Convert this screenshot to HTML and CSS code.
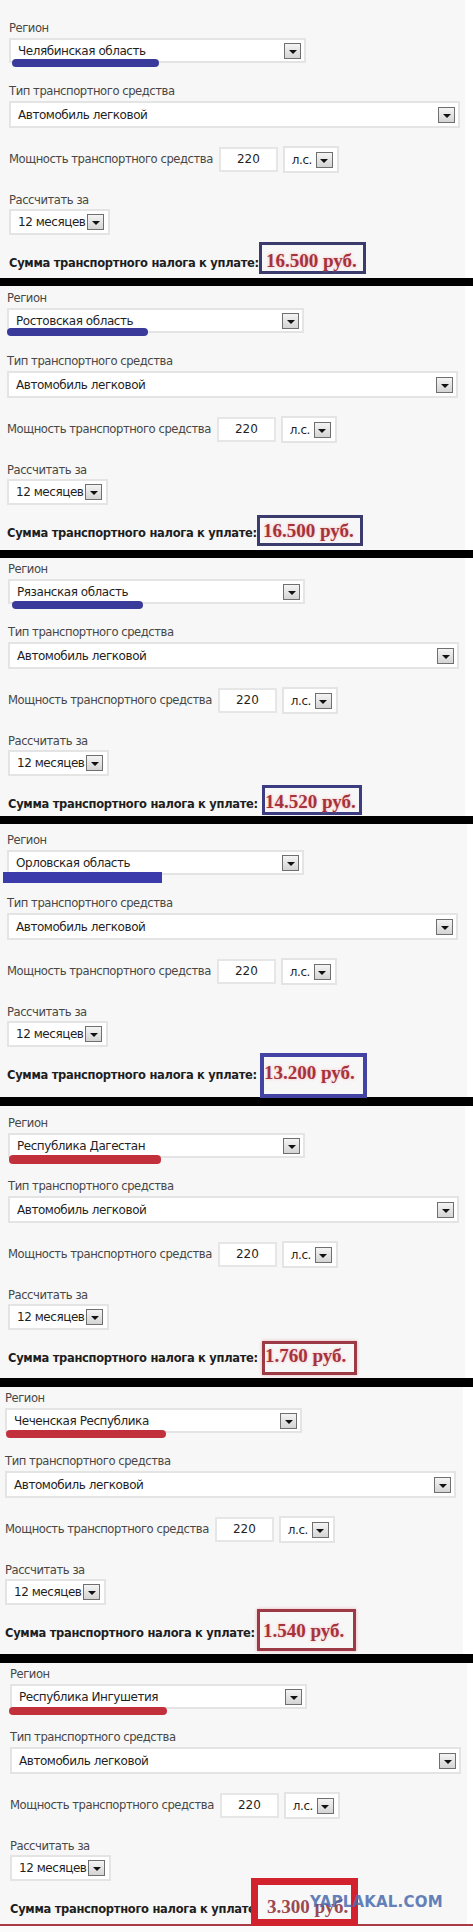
FILE: index.html
```html
<!DOCTYPE html>
<html lang="ru">
<head>
<meta charset="utf-8">
<title>Калькулятор транспортного налога</title>
<link rel="stylesheet" href="styles.css">
</head>
<body>
<main class="sheet">

  <section class="calc calc--1">
    <div class="field field--region">
      <div class="label">Регион</div>
      <div class="select select--region"><span class="select__value">Челябинская область</span><span class="select__btn"></span></div>
      <span class="mark mark--blue"></span>
    </div>
    <div class="field field--type">
      <div class="label">Тип транспортного средства</div>
      <div class="select select--wide"><span class="select__value">Автомобиль легковой</span><span class="select__btn"></span></div>
    </div>
    <div class="power">
      <span class="label">Мощность транспортного средства</span>
      <span class="input">220</span>
      <span class="select select--unit"><span class="select__value">л.с.</span><span class="select__btn"></span></span>
    </div>
    <div class="field field--period">
      <div class="label">Рассчитать за</div>
      <div class="select select--months"><span class="select__value">12 месяцев</span><span class="select__btn"></span></div>
    </div>
    <div class="total"><b class="total__label">Сумма транспортного налога к уплате:</b><span class="total__sum">16.500 руб.</span></div>
  </section>
  <div class="rule"></div>

  <section class="calc calc--2">
    <div class="field field--region">
      <div class="label">Регион</div>
      <div class="select select--region"><span class="select__value">Ростовская область</span><span class="select__btn"></span></div>
      <span class="mark mark--blue"></span>
    </div>
    <div class="field field--type">
      <div class="label">Тип транспортного средства</div>
      <div class="select select--wide"><span class="select__value">Автомобиль легковой</span><span class="select__btn"></span></div>
    </div>
    <div class="power">
      <span class="label">Мощность транспортного средства</span>
      <span class="input">220</span>
      <span class="select select--unit"><span class="select__value">л.с.</span><span class="select__btn"></span></span>
    </div>
    <div class="field field--period">
      <div class="label">Рассчитать за</div>
      <div class="select select--months"><span class="select__value">12 месяцев</span><span class="select__btn"></span></div>
    </div>
    <div class="total"><b class="total__label">Сумма транспортного налога к уплате:</b><span class="total__sum">16.500 руб.</span></div>
  </section>
  <div class="rule"></div>

  <section class="calc calc--3">
    <div class="field field--region">
      <div class="label">Регион</div>
      <div class="select select--region"><span class="select__value">Рязанская область</span><span class="select__btn"></span></div>
      <span class="mark mark--blue"></span>
    </div>
    <div class="field field--type">
      <div class="label">Тип транспортного средства</div>
      <div class="select select--wide"><span class="select__value">Автомобиль легковой</span><span class="select__btn"></span></div>
    </div>
    <div class="power">
      <span class="label">Мощность транспортного средства</span>
      <span class="input">220</span>
      <span class="select select--unit"><span class="select__value">л.с.</span><span class="select__btn"></span></span>
    </div>
    <div class="field field--period">
      <div class="label">Рассчитать за</div>
      <div class="select select--months"><span class="select__value">12 месяцев</span><span class="select__btn"></span></div>
    </div>
    <div class="total"><b class="total__label">Сумма транспортного налога к уплате:</b><span class="total__sum">14.520 руб.</span></div>
  </section>
  <div class="rule"></div>

  <section class="calc calc--4">
    <div class="field field--region">
      <div class="label">Регион</div>
      <div class="select select--region"><span class="select__value">Орловская область</span><span class="select__btn"></span></div>
      <span class="mark mark--bar"></span>
    </div>
    <div class="field field--type">
      <div class="label">Тип транспортного средства</div>
      <div class="select select--wide"><span class="select__value">Автомобиль легковой</span><span class="select__btn"></span></div>
    </div>
    <div class="power">
      <span class="label">Мощность транспортного средства</span>
      <span class="input">220</span>
      <span class="select select--unit"><span class="select__value">л.с.</span><span class="select__btn"></span></span>
    </div>
    <div class="field field--period">
      <div class="label">Рассчитать за</div>
      <div class="select select--months"><span class="select__value">12 месяцев</span><span class="select__btn"></span></div>
    </div>
    <div class="total"><b class="total__label">Сумма транспортного налога к уплате:</b><span class="total__sum">13.200 руб.</span></div>
  </section>
  <div class="rule rule--thick"></div>

  <section class="calc calc--5">
    <div class="field field--region">
      <div class="label">Регион</div>
      <div class="select select--region"><span class="select__value">Республика Дагестан</span><span class="select__btn"></span></div>
      <span class="mark mark--red"></span>
    </div>
    <div class="field field--type">
      <div class="label">Тип транспортного средства</div>
      <div class="select select--wide"><span class="select__value">Автомобиль легковой</span><span class="select__btn"></span></div>
    </div>
    <div class="power">
      <span class="label">Мощность транспортного средства</span>
      <span class="input">220</span>
      <span class="select select--unit"><span class="select__value">л.с.</span><span class="select__btn"></span></span>
    </div>
    <div class="field field--period">
      <div class="label">Рассчитать за</div>
      <div class="select select--months"><span class="select__value">12 месяцев</span><span class="select__btn"></span></div>
    </div>
    <div class="total"><b class="total__label">Сумма транспортного налога к уплате:</b><span class="total__sum">1.760 руб.</span></div>
  </section>
  <div class="rule rule--thick"></div>

  <section class="calc calc--6">
    <div class="field field--region">
      <div class="label">Регион</div>
      <div class="select select--region"><span class="select__value">Чеченская Республика</span><span class="select__btn"></span></div>
      <span class="mark mark--red"></span>
    </div>
    <div class="field field--type">
      <div class="label">Тип транспортного средства</div>
      <div class="select select--wide"><span class="select__value">Автомобиль легковой</span><span class="select__btn"></span></div>
    </div>
    <div class="power">
      <span class="label">Мощность транспортного средства</span>
      <span class="input">220</span>
      <span class="select select--unit"><span class="select__value">л.с.</span><span class="select__btn"></span></span>
    </div>
    <div class="field field--period">
      <div class="label">Рассчитать за</div>
      <div class="select select--months"><span class="select__value">12 месяцев</span><span class="select__btn"></span></div>
    </div>
    <div class="total"><b class="total__label">Сумма транспортного налога к уплате:</b><span class="total__sum">1.540 руб.</span></div>
  </section>
  <div class="rule rule--thick"></div>

  <section class="calc calc--7">
    <div class="field field--region">
      <div class="label">Регион</div>
      <div class="select select--region"><span class="select__value">Республика Ингушетия</span><span class="select__btn"></span></div>
      <span class="mark mark--red"></span>
    </div>
    <div class="field field--type">
      <div class="label">Тип транспортного средства</div>
      <div class="select select--wide"><span class="select__value">Автомобиль легковой</span><span class="select__btn"></span></div>
    </div>
    <div class="power">
      <span class="label">Мощность транспортного средства</span>
      <span class="input">220</span>
      <span class="select select--unit"><span class="select__value">л.с.</span><span class="select__btn"></span></span>
    </div>
    <div class="field field--period">
      <div class="label">Рассчитать за</div>
      <div class="select select--months"><span class="select__value">12 месяцев</span><span class="select__btn"></span></div>
    </div>
    <div class="total"><b class="total__label">Сумма транспортного налога к уплате:</b><span class="total__sum">3.300 руб.</span></div>
    <span class="watermark">YAPLAKAL.COM</span>
  </section>
  <div class="underline-red"></div>

</main>
</body>
</html>
```

FILE: styles.css
```css
* {
  box-sizing: border-box;
}

html,
body {
  margin: 0;
  padding: 0;
  background: #fff;
}

body {
  font-family: "DejaVu Sans", Verdana, sans-serif;
  font-size: 12px;
  color: #474747;
}

.sheet {
  width: 473px;
  overflow: hidden;
}

/* one calculator snapshot */
.calc {
  --dx: 8px;
  --dy: 4px;
  --h: 264px;
  position: relative;
  width: 465px;
  height: var(--h);
  padding: var(--dy) 0 0 var(--dx);
  background: #f7f7f7;
}

.calc--1 { --dx: 9px; --dy: 21px; --h: 278px; }
.calc--2 { --dx: 7px; --dy: 5px;  --h: 264px; }
.calc--3 { --dx: 8px; --dy: 4px;  --h: 258px; }
.calc--4 { --dx: 7px; --dy: 9px;  --h: 273px; width: 467px; }
.calc--5 { --dx: 8px; --dy: 10px; --h: 272px; }
.calc--6 { --dx: 5px; --dy: 4px;  --h: 267px; width: 463px; }
.calc--7 { --dx: 10px; --dy: 4px; --h: 261px; width: 467px; }

.rule {
  height: 8px;
  background: #000;
}

.rule--thick {
  height: 9px;
}

.underline-red {
  height: 8px;
  border-top: 2px solid #a93a45;
  background: #fbfbfb;
}

.label {
  font-size: 11.6px;
  line-height: 15px;
  letter-spacing: -0.45px;
  white-space: nowrap;
}

/* form controls */
.select {
  display: flex;
  align-items: center;
  justify-content: space-between;
  background: #fff;
  border: 2px solid #e4e4e4;
  padding: 0 3px 0 7px;
  color: #1f1f1f;
  letter-spacing: -0.45px;
  white-space: nowrap;
}

.select__btn {
  display: flex;
  align-items: center;
  justify-content: center;
  flex: none;
  width: 17px;
  height: 16px;
  border: 1px solid #6f6f6f;
  background: linear-gradient(#f4f4f4, #d4d4d4);
  padding-top: 2px;
}

.select__btn::after {
  content: "";
  border-left: 4px solid transparent;
  border-right: 4px solid transparent;
  border-top: 4px solid #111;
}

.field {
  position: relative;
}

.field .select {
  margin-top: 2px;
}

.select--region {
  width: 297px;
  height: 25px;
}

.field--type {
  margin-top: 21px;
}

.select--wide {
  width: 451px;
  height: 27px;
}

.power {
  display: flex;
  align-items: center;
  height: 27px;
  margin-top: 18px;
}

.input {
  width: 59px;
  height: 25px;
  margin: 0 5px 0 6px;
  border: 2px solid #e6e6e6;
  background: #fff;
  color: #1f1f1f;
  text-align: center;
  line-height: 21px;
}

.select--unit {
  width: 56px;
  height: 27px;
  padding-right: 4px;
}

.field--period {
  margin-top: 20px;
}

.field--period .select {
  margin-top: 1px;
}

.select--months {
  width: 101px;
  height: 26px;
  padding-right: 4px;
}

/* hand-drawn highlight under the chosen region */
.mark {
  position: absolute;
  left: 3px;
  top: 38px;
  width: 147px;
  height: 8px;
  border-radius: 4px;
}

.mark--blue { background: #3a3a9a; }
.mark--bar  { background: #3b3bac; border-radius: 0; }
.mark--red  { background: #c2303c; }

.calc--1 .mark { left: 3px;  top: 38px; width: 147px; }
.calc--2 .mark { left: 0;    top: 37px; width: 141px; }
.calc--3 .mark { left: 4px;  top: 39px; width: 131px; }
.calc--4 .mark { left: -4px; top: 39px; width: 159px; height: 11px; }
.calc--5 .mark { left: 1px;  top: 39px; width: 152px; height: 9px; }
.calc--6 .mark { left: 1px;  top: 39px; width: 160px; }
.calc--7 .mark { left: -1px; top: 40px; width: 158px; }

/* total line */
.total {
  margin-top: 20px;
  line-height: 15px;
  white-space: nowrap;
  color: #1e1e1e;
}

.total__label {
  font-size: 11.5px;
  letter-spacing: -0.3px;
}

.total__sum {
  font-family: "Liberation Serif", "Times New Roman", serif;
  font-weight: bold;
  font-size: 19px;
  line-height: 12px;
  color: #a3343e;
  text-shadow: 0 0 3px rgba(255, 150, 150, 0.7);
  border: 3px solid #3b3b6e;
}

.calc--1 .total__sum { margin-left: 0;    padding: 5px 6px 0 4px; }
.calc--2 .total__sum { margin-left: 0;    padding: 2px 6px 2px 3px; }
.calc--3 .total__sum { margin-left: 4px;  padding: 3px 3px 0 0; border-color: #3c3c80; }
.calc--4 .total__sum {
  margin-left: 3px;
  padding: 5px 8px 11px 0;
  border: 4px solid #4343a4;
}
.calc--5 .total__sum,
.calc--6 .total__sum {
  border-color: #9c3a45;
  box-shadow: 0 0 3px rgba(230, 120, 130, 0.6);
}
.calc--5 .total__sum { margin-left: 4px; padding: 1px 8px 6px 0; }
.calc--6 .total__sum { margin-left: 2px; padding: 8px 9px 7px 3px; }
.calc--7 .total__sum {
  margin-left: -9px;
  padding: 11px 3px 2px 9px;
  border: 7px solid #d2222e;
  background: #f8f8f8;
  color: #9a4a50;
  text-shadow: none;
}

.watermark {
  position: absolute;
  left: 310px;
  top: 232px;
  font-weight: bold;
  font-size: 15px;
  line-height: 15px;
  letter-spacing: 0.2px;
  color: #4a6cae;
  opacity: 0.85;
}
```
